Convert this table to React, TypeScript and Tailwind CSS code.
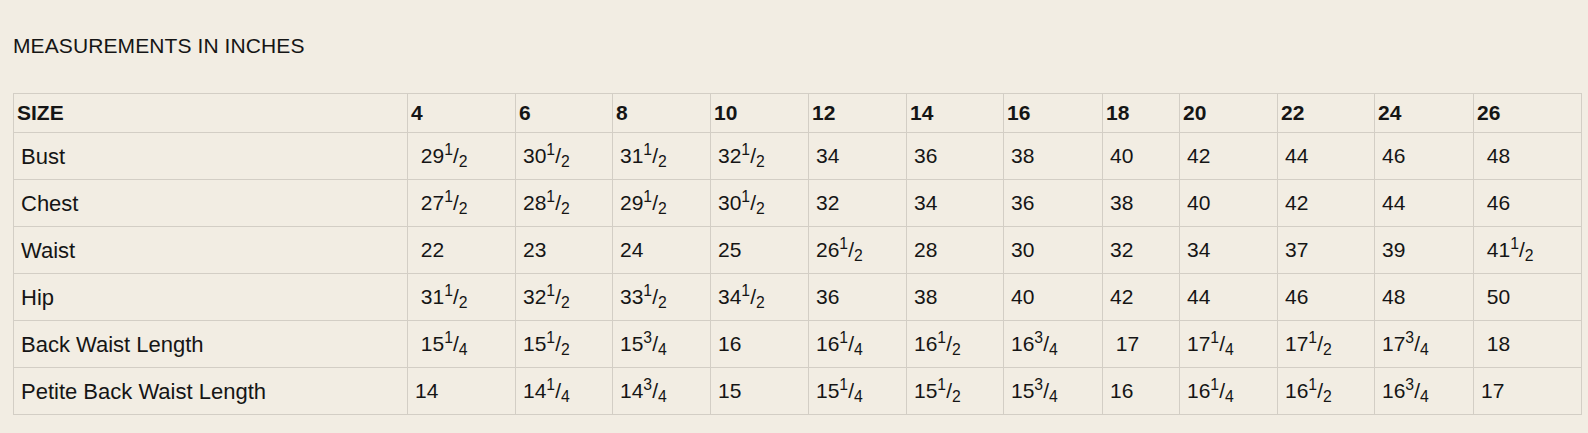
import React from "react";

type Cell = { w: string; f?: [string, string]; sp?: boolean };

const c = (s: string, sp = false): Cell => {
  const parts = s.split(" ");
  if (parts.length === 2) {
    const [n, d] = parts[1].split("/");
    return { w: parts[0], f: [n, d], sp };
  }
  return { w: s, sp };
};

const sizes = ["4", "6", "8", "10", "12", "14", "16", "18", "20", "22", "24", "26"];

const rows: { label: string; cells: Cell[] }[] = [
  {
    label: "Bust",
    cells: [
      c("29 1/2", true), c("30 1/2"), c("31 1/2"), c("32 1/2"), c("34"), c("36"),
      c("38"), c("40"), c("42"), c("44"), c("46"), c("48", true),
    ],
  },
  {
    label: "Chest",
    cells: [
      c("27 1/2", true), c("28 1/2"), c("29 1/2"), c("30 1/2"), c("32"), c("34"),
      c("36"), c("38"), c("40"), c("42"), c("44"), c("46", true),
    ],
  },
  {
    label: "Waist",
    cells: [
      c("22", true), c("23"), c("24"), c("25"), c("26 1/2"), c("28"),
      c("30"), c("32"), c("34"), c("37"), c("39"), c("41 1/2", true),
    ],
  },
  {
    label: "Hip",
    cells: [
      c("31 1/2", true), c("32 1/2"), c("33 1/2"), c("34 1/2"), c("36"), c("38"),
      c("40"), c("42"), c("44"), c("46"), c("48"), c("50", true),
    ],
  },
  {
    label: "Back Waist Length",
    cells: [
      c("15 1/4", true), c("15 1/2"), c("15 3/4"), c("16"), c("16 1/4"), c("16 1/2"),
      c("16 3/4"), c("17", true), c("17 1/4"), c("17 1/2"), c("17 3/4"), c("18", true),
    ],
  },
  {
    label: "Petite Back Waist Length",
    cells: [
      c("14"), c("14 1/4"), c("14 3/4"), c("15"), c("15 1/4"), c("15 1/2"),
      c("15 3/4"), c("16"), c("16 1/4"), c("16 1/2"), c("16 3/4"), c("17"),
    ],
  },
];

const widths = [394, 108, 97, 98, 98, 98, 97, 99, 77, 98, 97, 99, 108];

export default function App() {
  return (
    <div
      className="min-h-screen w-full bg-[#f2ede3] px-[13px] pt-[34px] text-[#151515]"
      style={{ fontFamily: '"Liberation Sans", Arial, Helvetica, sans-serif' }}
    >
      <h2 className="text-[21px] leading-[24px] font-normal tracking-[0.1px]">MEASUREMENTS IN INCHES</h2>
      <table className="mt-[35px] w-[1568px] table-fixed border-collapse text-[21px]">
        <colgroup>
          {widths.map((w, i) => (
            <col key={i} style={{ width: w }} />
          ))}
        </colgroup>
        <thead>
          <tr className="h-[39px]">
            <th className="border border-[#d3cec5] px-[3px] text-left font-bold">SIZE</th>
            {sizes.map((s) => (
              <th key={s} className="border border-[#d3cec5] px-[3px] text-left font-bold">
                {s}
              </th>
            ))}
          </tr>
        </thead>
        <tbody>
          {rows.map((r) => (
            <tr key={r.label} className="h-[47px]">
              <td className="border border-[#d3cec5] px-[7px] text-left text-[22px]">{r.label}</td>
              {r.cells.map((cell, i) => (
                <td key={i} className="border border-[#d3cec5] px-[7px] text-left whitespace-nowrap">
                  {cell.sp ? "\u00a0" : ""}
                  {cell.w}
                  {cell.f ? (
                    <>
                      <sup>{cell.f[0]}</sup>/<sub>{cell.f[1]}</sub>
                    </>
                  ) : null}
                </td>
              ))}
            </tr>
          ))}
        </tbody>
      </table>
    </div>
  );
}
